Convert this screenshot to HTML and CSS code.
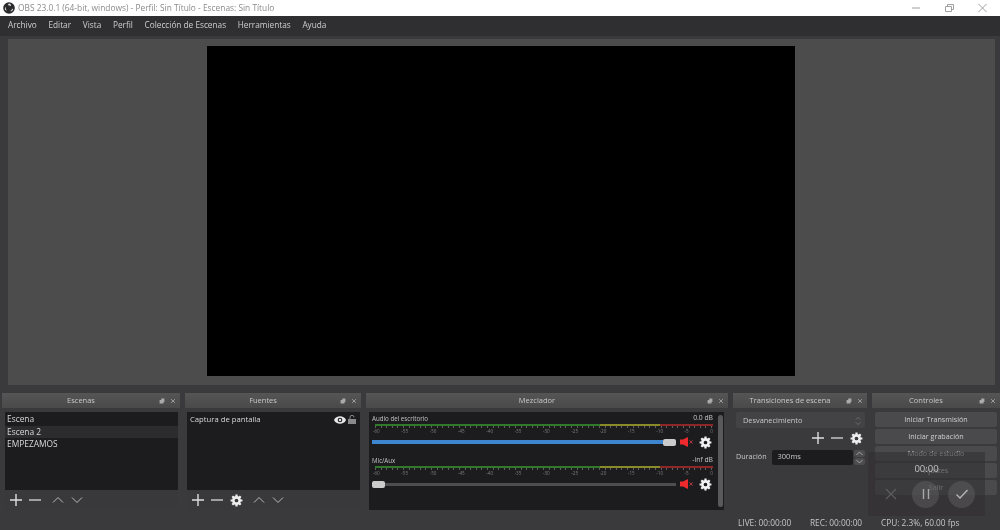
FILE: index.html
```html
<!DOCTYPE html>
<html lang="es">
<head>
<meta charset="utf-8">
<title>OBS</title>
<link rel="stylesheet" href="styles.css">
</head>
<body>
<svg class="defs" width="0" height="0" aria-hidden="true">
  <symbol id="gear" viewBox="0 0 14 14">
    <circle cx="7" cy="7" r="3.4" fill="none" stroke="currentColor" stroke-width="2.8"/>
    <g stroke="currentColor" stroke-width="2.4">
      <path d="M7 .6V3M7 11v2.4M.6 7H3M11 7h2.4M2.5 2.5l1.7 1.7M9.8 9.8l1.7 1.7M2.5 11.5l1.7-1.7M9.8 4.2l1.7-1.7"/>
    </g>
  </symbol>
  <symbol id="plus" viewBox="0 0 12 12"><path d="M6 0v12M0 6h12" stroke="currentColor" stroke-width="1.4"/></symbol>
  <symbol id="minus" viewBox="0 0 12 12"><path d="M0 6h12" stroke="currentColor" stroke-width="1.4"/></symbol>
  <symbol id="up" viewBox="0 0 12 12"><path d="M1 8.5L6 3.5l5 5" fill="none" stroke="currentColor" stroke-width="1"/></symbol>
  <symbol id="down" viewBox="0 0 12 12"><path d="M1 3.5L6 8.5l5-5" fill="none" stroke="currentColor" stroke-width="1"/></symbol>
  <symbol id="float" viewBox="0 0 8 8"><path d="M3 .8h4.2v4.4H6V7.2H.8V2.8H3z" fill="currentColor"/></symbol>
  <symbol id="close" viewBox="0 0 8 8"><path d="M1.5 1.5l5 5M6.5 1.5l-5 5" stroke="currentColor" stroke-width="1.1"/></symbol>
  <symbol id="mute" viewBox="0 0 14 10"><path d="M0 2.6h3L8 0v10L3 7.4H0z" fill="#ee2a2f"/><path d="M9.6 3.4l3 3.2M12.6 3.4l-3 3.2" stroke="#b5383c" stroke-width="1"/></symbol>
</svg>

<header class="titlebar">
  <svg class="logo" viewBox="0 0 12 12" width="12" height="12">
    <circle cx="6" cy="6" r="5.8" fill="#2a292b"/>
    <path d="M6 1.6a2 2 0 0 1 1.9 2.7A3 3 0 0 0 5 3.2 2 2 0 0 1 6 1.6zM2 7.6a2 2 0 0 1 1-2.6 3 3 0 0 0 .9 3.6A2 2 0 0 1 2 7.6zM10 7.6A2 2 0 0 1 7.1 9a3 3 0 0 0 2-2.6 2 2 0 0 1 .9 1.2z" fill="#e8e8e8"/>
  </svg>
  <span class="title-text">OBS 23.0.1 (64-bit, windows) - Perfil: Sin Título - Escenas: Sin Título</span>
  <div class="window-buttons">
    <svg width="9" height="8" viewBox="0 0 9 8"><path d="M0 4h8" stroke="#a0a0a0"/></svg>
    <svg width="9" height="8" viewBox="0 0 9 8"><path d="M.5 2.5h6v5h-6zM2.5 2.5V.5h6v5H6.5" fill="none" stroke="#a0a0a0"/></svg>
    <svg width="9" height="8" viewBox="0 0 9 8"><path d="M.5 0l8 8M8.5 0l-8 8" stroke="#a0a0a0"/></svg>
  </div>
</header>

<nav class="menubar">
  <span>Archivo</span><span>Editar</span><span>Vista</span><span>Perfil</span><span>Colección de Escenas</span><span>Herramientas</span><span>Ayuda</span>
</nav>

<main class="preview"><div class="canvas"></div></main>

<section class="docks">
  <article class="dock">
    <div class="dock-title"><span>Escenas</span><svg class="ic-f"><use href="#float"/></svg><svg class="ic-c"><use href="#close"/></svg></div>
    <div class="dock-body list-body">
      <ul class="list">
        <li>Escena</li>
        <li class="selected">Escena 2</li>
        <li>EMPEZAMOS</li>
      </ul>
      <div class="toolbar">
        <svg class="t-plus"><use href="#plus"/></svg>
        <svg class="t-minus"><use href="#minus"/></svg>
        <svg class="t-arrow t-first"><use href="#up"/></svg>
        <svg class="t-arrow"><use href="#down"/></svg>
      </div>
    </div>
  </article>

  <article class="dock">
    <div class="dock-title"><span>Fuentes</span><svg class="ic-f"><use href="#float"/></svg><svg class="ic-c"><use href="#close"/></svg></div>
    <div class="dock-body list-body sources">
      <ul class="list">
        <li class="source">
          <span>Captura de pantalla</span>
          <svg class="eye" viewBox="0 0 12 8" width="12" height="8"><path d="M0 4c2-5 10-5 12 0-2 5-10 5-12 0z" fill="#e6e6e6"/><circle cx="6" cy="4" r="2.3" fill="#1c1b1e"/><circle cx="6" cy="4" r="1.2" fill="#e6e6e6"/></svg>
          <svg class="lock" viewBox="0 0 8 9" width="8" height="9"><path d="M2 4V2.3a2 2 0 0 1 4 0" fill="none" stroke="#8a8a8a"/><rect y="4" width="8" height="5" fill="#8a8a8a"/></svg>
        </li>
      </ul>
      <div class="toolbar">
        <svg class="t-plus"><use href="#plus"/></svg>
        <svg class="t-minus"><use href="#minus"/></svg>
        <svg class="t-gear"><use href="#gear"/></svg>
        <svg class="t-arrow t-first2"><use href="#up"/></svg>
        <svg class="t-arrow"><use href="#down"/></svg>
      </div>
    </div>
  </article>

  <article class="dock">
    <div class="dock-title"><span>Mezclador</span><svg class="ic-f"><use href="#float"/></svg><svg class="ic-c"><use href="#close"/></svg></div>
    <div class="dock-body mixer">
      <div class="channels">
        <div class="channel">
          <div class="ch-head"><span>Audio del escritorio</span><span class="db">0.0 dB</span></div>
          <div class="meter"></div>
          <div class="scale"><span>-60</span><span>-55</span><span>-50</span><span>-45</span><span>-40</span><span>-35</span><span>-30</span><span>-25</span><span>-20</span><span>-15</span><span>-10</span><span>-5</span><span>0</span></div>
          <div class="ch-controls">
            <div class="slider"><div class="fill"></div><div class="handle"></div></div>
            <svg class="mute"><use href="#mute"/></svg>
            <svg class="ch-gear"><use href="#gear"/></svg>
          </div>
        </div>
        <div class="channel">
          <div class="ch-head"><span>Mic/Aux</span><span class="db">-inf dB</span></div>
          <div class="meter"></div>
          <div class="scale"><span>-60</span><span>-55</span><span>-50</span><span>-45</span><span>-40</span><span>-35</span><span>-30</span><span>-25</span><span>-20</span><span>-15</span><span>-10</span><span>-5</span><span>0</span></div>
          <div class="ch-controls">
            <div class="slider"><div class="handle"></div><div class="rail"></div></div>
            <svg class="mute"><use href="#mute"/></svg>
            <svg class="ch-gear"><use href="#gear"/></svg>
          </div>
        </div>
      </div>
      <div class="scrollbar"></div>
    </div>
  </article>

  <article class="dock">
    <div class="dock-title"><span>Transiciones de escena</span><svg class="ic-f"><use href="#float"/></svg><svg class="ic-c"><use href="#close"/></svg></div>
    <div class="trans">
      <div class="combo"><span>Desvanecimiento</span><svg width="6" height="10" viewBox="0 0 6 10"><path d="M.8 3.6L3 1.4l2.2 2.2M.8 6.4L3 8.6l2.2-2.2" fill="none" stroke="#777" stroke-width=".8"/></svg></div>
      <div class="trans-tools">
        <svg class="t-plus"><use href="#plus"/></svg>
        <svg class="t-minus"><use href="#minus"/></svg>
        <svg class="t-gear"><use href="#gear"/></svg>
      </div>
      <div class="duration">
        <span>Duración</span>
        <div class="dur-input">300ms</div>
        <div class="spin">
          <svg viewBox="0 0 11 7"><path d="M2.5 5L5.5 2l3 3" fill="none" stroke="#bbb" stroke-width=".8"/></svg>
          <svg viewBox="0 0 11 7"><path d="M2.5 2l3 3 3-3" fill="none" stroke="#bbb" stroke-width=".8"/></svg>
        </div>
      </div>
    </div>
  </article>

  <article class="dock">
    <div class="dock-title"><span>Controles</span><svg class="ic-f"><use href="#float"/></svg><svg class="ic-c"><use href="#close"/></svg></div>
    <div class="controls">
      <div class="btn">Iniciar Transmisión</div>
      <div class="btn">Iniciar grabación</div>
      <div class="btn">Modo de estudio</div>
      <div class="btn">Ajustes</div>
      <div class="btn">Salir</div>
    </div>
  </article>
</section>

<footer class="status">
  <span class="st-live">LIVE: 00:00:00</span>
  <span class="st-rec">REC: 00:00:00</span>
  <span>CPU: 2.3%, 60.00 fps</span>
</footer>

<aside class="rec-overlay">
  <div class="timer">00:00</div>
  <div class="rec-buttons">
    <svg class="rec-x" width="12" height="12" viewBox="0 0 12 12"><path d="M1 1l10 10M11 1L1 11" stroke="#5d5d5d" stroke-width="1.2"/></svg>
    <div class="round"><svg width="10" height="12" viewBox="0 0 10 12"><path d="M2.5 1v10M7.5 1v10" stroke="#a8a8a8" stroke-width="1.4"/></svg></div>
    <div class="round"><svg width="14" height="12" viewBox="0 0 14 12"><path d="M1.5 6.5l3.5 3.5 7.5-8" fill="none" stroke="#b8b8b8" stroke-width="1.3"/></svg></div>
  </div>
</aside>
</body>
</html>
```

FILE: styles.css
```css
* { box-sizing: border-box; margin: 0; padding: 0; }
html, body { width: 1000px; height: 530px; overflow: hidden; }
html { background: #3a393b; }
body {
  position: relative;
  display: flex;
  flex-direction: column;
  background: #3a393b;
  color: #d6d6d6;
  font-family: "Open Sans", "Noto Sans", sans-serif;
  font-size: 8.5px;
  line-height: 1;
  filter: blur(.4px);
}
.defs { position: absolute; }

.titlebar {
  height: 16px;
  flex: none;
  background: #fff;
  display: flex;
  align-items: center;
  padding-left: 3px;
}
.title-text { margin-left: 3px; font-size: 8.37px; color: #8a8a8a; }
.logo { flex: none; }
.window-buttons { margin-left: auto; display: flex; gap: 24px; padding-right: 13px; padding-bottom: 1px; align-items: center; height: 16px; }
.window-buttons svg { display: block; }

.menubar {
  height: 20px;
  flex: none;
  background: #2f2e30;
  display: flex;
  align-items: center;
  gap: 11.7px;
  padding: 0 8px 2px;
  font-size: 8.25px;
  color: #cfcfcf;
}

.preview {
  flex: none;
  margin: 3px 5px 0 8px;
  height: 346px;
  background: #4c4c4c;
  padding: 7px 1px 0 0;
  display: flex;
  justify-content: center;
}
.canvas { width: 588px; height: 330px; background: #000; }

.docks {
  flex: none;
  margin-top: 8px;
  padding-left: 2px;
  display: grid;
  grid-template-columns: 178px 176px 362px 134px 128px;
  column-gap: 5px;
  height: 117px;
}
.dock { display: flex; flex-direction: column; min-width: 0; }
.dock-title {
  height: 15px;
  flex: none;
  background: linear-gradient(#555, #4a4a4b);
  display: flex;
  align-items: center;
  justify-content: center;
  position: relative;
  padding: 1px 20px 0 0;
  font-size: 7.5px;
  color: #c8c8c8;
}
.ic-f, .ic-c { position: absolute; top: 4.5px; width: 6px; height: 6px; color: #aaa; }
.ic-f { right: 15px; }
.ic-c { right: 4px; }

.dock-body { margin: 4px 2px 0 3px; height: 98px; background: #1c1b1e; }
.list-body { display: flex; flex-direction: column; }
.sources { margin: 4px 1px 0 2px; }
.list { list-style: none; flex: 1; padding-top: 1px; }
.list li { height: 12.5px; display: flex; align-items: center; padding-left: 2px; color: #d8d8d8; font-size: 8.4px; }
.list li.selected { background: #2c2b2e; }
.list li.source { padding: 0 4px 0 3px; height: 13px; font-size: 7.7px; }
.source span { flex: 1; }
.eye { margin-right: 2px; }
.toolbar {
  height: 20px;
  flex: none;
  background: #39383a;
  display: flex;
  align-items: center;
  padding-left: 5px;
  color: #d4d4d4;
}
.toolbar svg { display: block; }
.t-plus { width: 12px; height: 12px; color: #dedede; }
.t-minus { width: 12px; height: 12px; margin-left: 7px; color: #cfcfcf; }
.t-gear { width: 13px; height: 13px; margin-left: 7px; color: #eee; }
.t-arrow { width: 12px; height: 12px; margin-left: 7px; color: #bbb; }
.t-first { margin-left: 11px; }
.t-first2 { margin-left: 10px; }

.mixer { display: flex; margin: 4px 4px 0 3px; padding: 3px 1px 3px 3px; background: #1c1b1e; }
.channels { flex: 1; min-width: 0; display: flex; flex-direction: column; gap: 7px; padding-right: 5px; }
.channel { height: 35px; }
.ch-head { display: flex; justify-content: space-between; align-items: flex-end; font-size: 6.2px; color: #c4c4c4; height: 7px; padding-top: 1px; }
.db { font-size: 6.8px; }
.meter {
  margin: 2px 0 0 3px;
  height: 4px;
  background:
    repeating-linear-gradient(90deg, rgba(180,180,180,.45) 0 1px, transparent 1px 5.6px) bottom / 100% 2px no-repeat,
    linear-gradient(90deg, #2f7a2a 0 66.7%, #8a8a28 66.7% 84.4%, #8f2727 84.4% 100%) top / 100% 2px no-repeat;
}
.scale {
  display: flex;
  justify-content: space-between;
  margin: 1px 0 0 1px;
  font-size: 4.6px;
  color: #7d7d7d;
  height: 5px;
}
.ch-controls { display: flex; align-items: center; height: 14px; margin-top: 1px; }
.slider { flex: 1; display: flex; align-items: center; height: 7px; }
.fill { flex: 1; height: 4px; background: #3d86cf; }
.rail { flex: 1; height: 3px; background: #4d4c4e; }
.handle { width: 13px; height: 7px; border-radius: 2px; background: #cbcbcb; flex: none; }
.mute { width: 14px; height: 10px; margin-left: 4px; flex: none; }
.ch-gear { width: 13px; height: 13px; margin-left: 5px; margin-right: 1px; flex: none; color: #f2f2f2; }
.scrollbar { flex: none; width: 5px; background: #59585a; border-radius: 3px; }

.trans { padding: 4px 2px 0 3px; }
.combo {
  height: 16px;
  background: #434244;
  border-radius: 2px;
  display: flex;
  align-items: center;
  justify-content: space-between;
  padding: 1px 4px 0 7px;
  color: #c8c8c8;
  font-size: 7.4px;
}
.trans-tools { display: flex; align-items: center; justify-content: flex-end; height: 20px; padding-right: 2px; color: #dedede; }
.duration { display: flex; align-items: center; height: 15px; margin-top: 1px; padding-top: 1px; font-size: 7.2px; color: #c8c8c8; }
.dur-input {
  width: 83px;
  height: 15px;
  margin-left: 5px;
  background: #1c1b1e;
  padding-left: 6px;
  display: flex;
  align-items: center;
  border-radius: 2px;
  font-size: 7.5px;
}
.spin { width: 11px; height: 15px; margin-left: 1px; display: flex; flex-direction: column; gap: 1px; }
.spin svg { display: block; width: 11px; height: 7px; background: #4d4c4e; border-radius: 2px; }

.controls { padding: 4px 3px 0 3px; display: flex; flex-direction: column; gap: 2px; }
.btn {
  height: 15px;
  background: #4a494b;
  border-radius: 2px;
  display: flex;
  align-items: center;
  justify-content: center;
  color: #cfcfcf;
  font-size: 7.2px;
}

.status {
  height: 20px;
  flex: none;
  display: flex;
  align-items: center;
  padding: 6px 0 0 738px;
  color: #c6c6c6;
  font-size: 8.3px;
}
.st-live { width: 72px; }
.st-rec { width: 71px; }

.rec-overlay {
  position: absolute;
  left: 868px;
  top: 452px;
  width: 117px;
  height: 64px;
  background: rgba(50, 49, 51, .6);
  color: #c4c4c4;
}
.timer { text-align: center; font-size: 9.5px; padding-top: 12px; }
.rec-buttons { display: flex; align-items: center; margin-top: 7px; padding-left: 17px; }
.round {
  width: 27px;
  height: 27px;
  border-radius: 50%;
  background: rgba(95, 94, 96, .5);
  display: flex;
  align-items: center;
  justify-content: center;
}
.rec-x { margin-right: 15px; }
.round + .round { margin-left: 9px; }
```
